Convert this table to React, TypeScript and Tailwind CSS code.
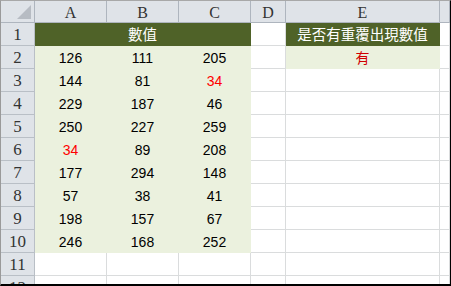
import React from "react";

const data: (number | [number, boolean])[][] = [
  [126, 111, 205],
  [144, 81, [34, true]],
  [229, 187, 46],
  [250, 227, 259],
  [[34, true], 89, 208],
  [177, 294, 148],
  [57, 38, 41],
  [198, 157, 67],
  [246, 168, 252],
];

const hdr =
  "h-[22px] box-border bg-[#dfe3e8] border-r border-b border-[#aeb5be] flex items-center justify-center text-[16px] text-[#333] pt-[2px] font-['Liberation_Serif',serif]";
const rowHdr =
  "h-[23px] box-border bg-[#dfe3e8] border-r border-b border-[#b9bfc6] flex items-center justify-center text-[17px] text-[#333] pt-[1px] font-['Liberation_Serif',serif]";
const numCls =
  "h-[23px] box-border bg-[#ebf1de] border-r border-b border-[#ebf1de] flex items-center justify-center text-[14px] pt-[2px] font-['Liberation_Sans',Arial,sans-serif]";
const cjkCls = "font-['Noto_Sans_CJK_TC','Noto_Sans',sans-serif]";

function Empty() {
  return <div className="h-[23px] box-border border-r border-b border-[#dadcdd] bg-white" />;
}

export default function App() {
  return (
    <div className="w-[451px] h-[286px] overflow-hidden bg-white box-border border-l border-t border-l-[#9a9a9a] border-t-[#a8a8a8] border-r border-r-black border-b-2 border-b-black">
      <div className="grid grid-cols-[34px_72px_72px_72px_35px_154px_1fr]">
        <div className="h-[22px] box-border bg-[#dfe3e8] border-r border-b border-[#aeb5be] relative">
          <svg className="absolute left-[16px] top-[4px]" width="14" height="14" viewBox="0 0 14 14">
            <polygon points="14,0 14,14 0,14" fill="#b7bcc3" />
          </svg>
        </div>
        {["A", "B", "C", "D", "E", ""].map((l, i) => (
          <div key={i} className={hdr}>
            {l}
          </div>
        ))}

        <div className={rowHdr}>1</div>
        <div
          className={`col-span-3 h-[23px] box-border bg-[#4f6228] border-r border-b border-[#4f6228] flex items-center justify-center text-white text-[14.5px] ${cjkCls}`}
        >
          數值
        </div>
        <Empty />
        <div
          className={`h-[23px] box-border bg-[#4f6228] border-r border-b border-[#4f6228] flex items-center justify-center text-white text-[14.5px] whitespace-nowrap ${cjkCls}`}
        >
          是否有重覆出現數值
        </div>
        <Empty />

        {data.map((row, ri) => (
          <React.Fragment key={ri}>
            <div className={rowHdr}>{ri + 2}</div>
            {row.map((v, ci) => {
              const red = Array.isArray(v);
              const n = Array.isArray(v) ? v[0] : v;
              return (
                <div key={ci} className={`${numCls} ${red ? "text-[#ff0000]" : "text-black"}`}>
                  {n}
                </div>
              );
            })}
            <Empty />
            {ri === 0 ? (
              <div
                className={`h-[23px] box-border bg-[#ebf1de] border-r border-b border-[#ebf1de] flex items-center justify-center text-[#d00000] text-[14px] ${cjkCls}`}
              >
                有
              </div>
            ) : (
              <Empty />
            )}
            <Empty />
          </React.Fragment>
        ))}

        {[11, 12].map((r) => (
          <React.Fragment key={r}>
            <div className={rowHdr}>{r}</div>
            <Empty />
            <Empty />
            <Empty />
            <Empty />
            <Empty />
            <Empty />
          </React.Fragment>
        ))}
      </div>
    </div>
  );
}
